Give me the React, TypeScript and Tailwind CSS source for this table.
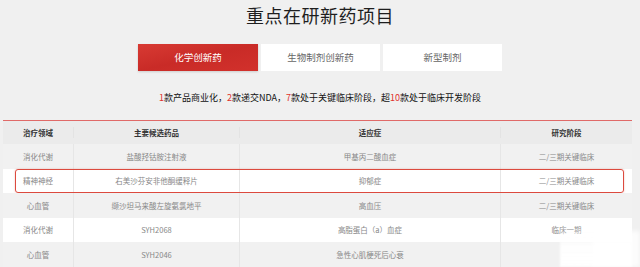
import React from 'react'

type Row = {
  area: string
  drug: string
  indication: string
  stage: string
  tone: 'grey' | 'white'
  marked?: boolean
}

const rows: Row[] = [
  { area: '消化代谢', drug: '盐酸羟钴胺注射液', indication: '甲基丙二酸血症', stage: '二/三期关键临床', tone: 'grey' },
  { area: '精神神经', drug: '右美沙芬安非他酮缓释片', indication: '抑郁症', stage: '二/三期关键临床', tone: 'white', marked: true },
  { area: '心血管', drug: '缬沙坦马来酸左旋氨氯地平', indication: '高血压', stage: '二/三期关键临床', tone: 'grey' },
  { area: '消化代谢', drug: 'SYH2068', indication: '高脂蛋白（a）血症', stage: '临床一期', tone: 'white' },
  { area: '心血管', drug: 'SYH2046', indication: '急性心肌梗死后心衰', stage: '', tone: 'grey' },
]

const tabs = ['化学创新药', '生物制剂创新药', '新型制剂']

const cols = 'grid grid-cols-[70px_166px_261px_132px]'

function Red({ children }: { children: React.ReactNode }) {
  return <span className="text-[#e0322c]">{children}</span>
}

export default function App() {
  return (
    <div
      className="relative flex h-[267px] w-[640px] flex-col items-center overflow-hidden bg-[#f0f0f0] text-[#222]"
      style={{ fontFamily: '"Noto Sans CJK SC", "Noto Sans", sans-serif' }}
    >
      <h1 className="mt-[3px] text-[18px] font-normal leading-[24px] tracking-[0.5px] text-[#1e1e1e]">
        重点在研新药项目
      </h1>

      {/* category tabs */}
      <div className="mt-[17px] flex h-[27px] gap-[3px]">
        {tabs.map((t, i) => (
          <div
            key={t}
            className={
              i === 0
                ? 'flex w-[120px] items-center justify-center bg-gradient-to-br from-[#d83a33] via-[#c92b27] to-[#d2312c] text-[9.5px] text-white shadow-[0_1px_2px_rgba(0,0,0,0.15)]'
                : 'flex w-[119px] items-center justify-center bg-white text-[9.5px] text-[#666]'
            }
          >
            {t}
          </div>
        ))}
      </div>

      <p className="mt-[20px] text-[9px] leading-[14px] text-[#111]">
        <Red>1</Red>款产品商业化，<Red>2</Red>款递交NDA，<Red>7</Red>款处于关键临床阶段，超<Red>10</Red>款处于临床开发阶段
      </p>

      {/* pipeline table */}
      <div className="mt-[15px] ml-[3px] w-[629px] self-start border-t-[1.5px] border-[#e06a68] text-[7.5px]">
        <div className={`${cols} h-[23px] items-center bg-[#ebebeb] font-bold text-[#333]`}>
          <div className="text-center">治疗领域</div>
          <div className="border-l border-[#e3e3e3] text-center">主要候选药品</div>
          <div className="border-l border-[#e3e3e3] text-center">适应症</div>
          <div className="border-l border-[#e3e3e3] text-center">研究阶段</div>
        </div>
        {rows.map((r, i) => (
          <div
            key={i}
            className={`${cols} relative h-[24.5px] items-stretch text-[#888] ${
              r.tone === 'grey' ? 'bg-[#f1f1f1]' : 'bg-white'
            }`}
          >
            <div className="flex items-center justify-center">{r.area}</div>
            <div className="flex items-center justify-center border-l border-[#e6e6e6]">{r.drug}</div>
            <div className="flex items-center justify-center border-l border-[#e6e6e6]">{r.indication}</div>
            <div className="flex items-center justify-center border-l border-[#e6e6e6]">{r.stage}</div>
            {r.marked && (
              <div className="absolute inset-y-0 left-[12px] right-[8px] rounded-[3px] border-[1.5px] border-[#dc4a3e] shadow-[0_0_2px_rgba(200,60,50,0.35)]" />
            )}
          </div>
        ))}
      </div>

      {/* faded corner over the last stage cells */}
      <div className="absolute bottom-0 left-[560px] h-[40px] w-[72px] bg-gradient-to-b from-white/10 via-white/90 to-white blur-[1px]" />
      <div className="absolute bottom-0 left-[592px] h-[36px] w-[48px] bg-white/80 blur-[2px]" />
    </div>
  )
}
